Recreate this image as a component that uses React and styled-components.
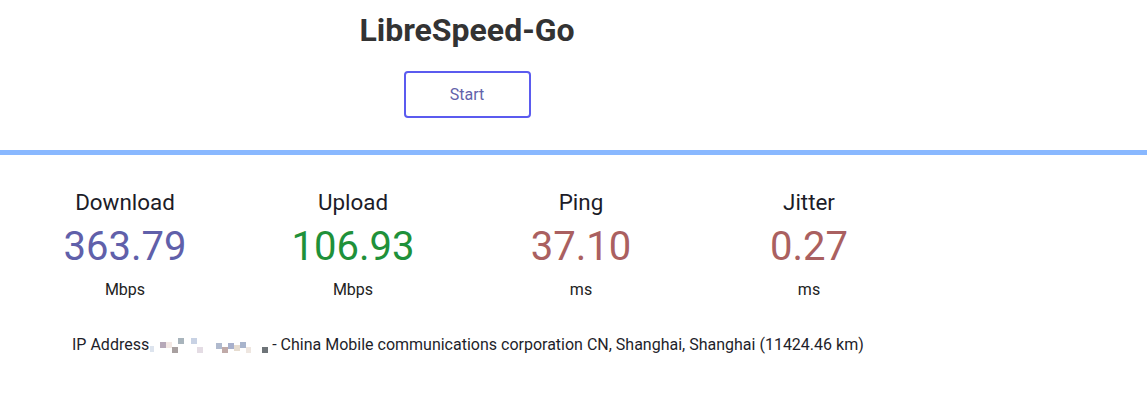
import React from "react";
import styled, { createGlobalStyle } from "styled-components";

const Global = createGlobalStyle`
  html, body { margin: 0; padding: 0; background: #fff; }
  body { font-family: Roboto, "Open Sans", Arial, sans-serif; color: #202020; }
`;

const Header = styled.header`
  width: 912px;
  margin-left: 11px;
  display: flex;
  flex-direction: column;
  align-items: center;
  padding-top: 11px;
  padding-bottom: 32px;
`;

const Title = styled.h1`
  margin: 0;
  font-size: 32px;
  font-weight: 700;
  color: #333;
  line-height: 38px;
`;

const StartButton = styled.button`
  margin-top: 22px;
  width: 127px;
  height: 47px;
  border: 2px solid #5b5bef;
  border-radius: 4px;
  background: #fff;
  color: #6262aa;
  font-family: Roboto, Arial, sans-serif;
  font-size: 16px;
  cursor: pointer;
`;

const Divider = styled.div`
  height: 5px;
  background: #89b8ff;
`;

const Results = styled.section`
  width: 912px;
  margin-left: 11px;
  padding-top: 33px;
  display: grid;
  grid-template-columns: repeat(4, 228px);
`;

const Stat = styled.div`
  display: flex;
  flex-direction: column;
  align-items: center;
`;

const Label = styled.div`
  font-size: 22.4px;
  line-height: 28px;
  color: #1c1c28;
`;

const Value = styled.div`
  font-size: 40px;
  line-height: 52px;
  margin-top: 5px;
  color: ${p => p.$color};
`;

const Unit = styled.div`
  font-size: 16px;
  line-height: 20px;
  margin-top: 7px;
  color: #222;
`;

const IpLine = styled.div`
  margin-left: 72px;
  margin-top: 35px;
  font-size: 16px;
  line-height: 20px;
  color: #1e1e2a;
  display: flex;
  align-items: center;
`;

const Blur = styled.span`
  display: inline-flex;
  align-items: flex-end;
  height: 16px;
  margin: 0 4px 0 1px;
`;

const Px = styled.span`
  display: inline-block;
  width: ${p => p.$w}px;
  height: 6px;
  margin-bottom: ${p => p.$up}px;
  background: ${p => p.$c};
`;

const blurCells = [
  ["#dde4ee", 4, 1], ["#fff", 6, 0], ["#b6a8b8", 6, 5], ["#f3e8e4", 6, 5], ["#a8a0a0", 6, 0],
  ["#a8b4bc", 6, 9], ["#fff", 7, 0], ["#c8d2e4", 6, 9], ["#e4dce4", 6, 0], ["#fff", 13, 0],
  ["#b0bace", 6, 4], ["#c0aaa8", 6, 0], ["#a8b0cc", 6, 4], ["#e6dcd0", 6, 2], ["#a8b4cc", 6, 5], ["#eee6e0", 5, 0],
  ["#fff", 11, 0], ["#6e7478", 6, 0]
];

const stats = [
  { label: "Download", value: "363.79", unit: "Mbps", color: "#6060aa" },
  { label: "Upload", value: "106.93", unit: "Mbps", color: "#1f913a" },
  { label: "Ping", value: "37.10", unit: "ms", color: "#aa6060" },
  { label: "Jitter", value: "0.27", unit: "ms", color: "#aa6060" },
];

export default function App() {
  return (
    <>
      <Global />
      <Header>
        <Title>LibreSpeed-Go</Title>
        <StartButton>Start</StartButton>
      </Header>
      <Divider />
      <Results>
        {stats.map(s => (
          <Stat key={s.label}>
            <Label>{s.label}</Label>
            <Value $color={s.color}>{s.value}</Value>
            <Unit>{s.unit}</Unit>
          </Stat>
        ))}
      </Results>
      <IpLine>
        IP Address
        <Blur>
          {blurCells.map(([c, w, up], i) => (
            <Px key={i} $c={c} $w={w} $up={up} />
          ))}
        </Blur>
        - China Mobile communications corporation CN, Shanghai, Shanghai (11424.46 km)
      </IpLine>
    </>
  );
}
